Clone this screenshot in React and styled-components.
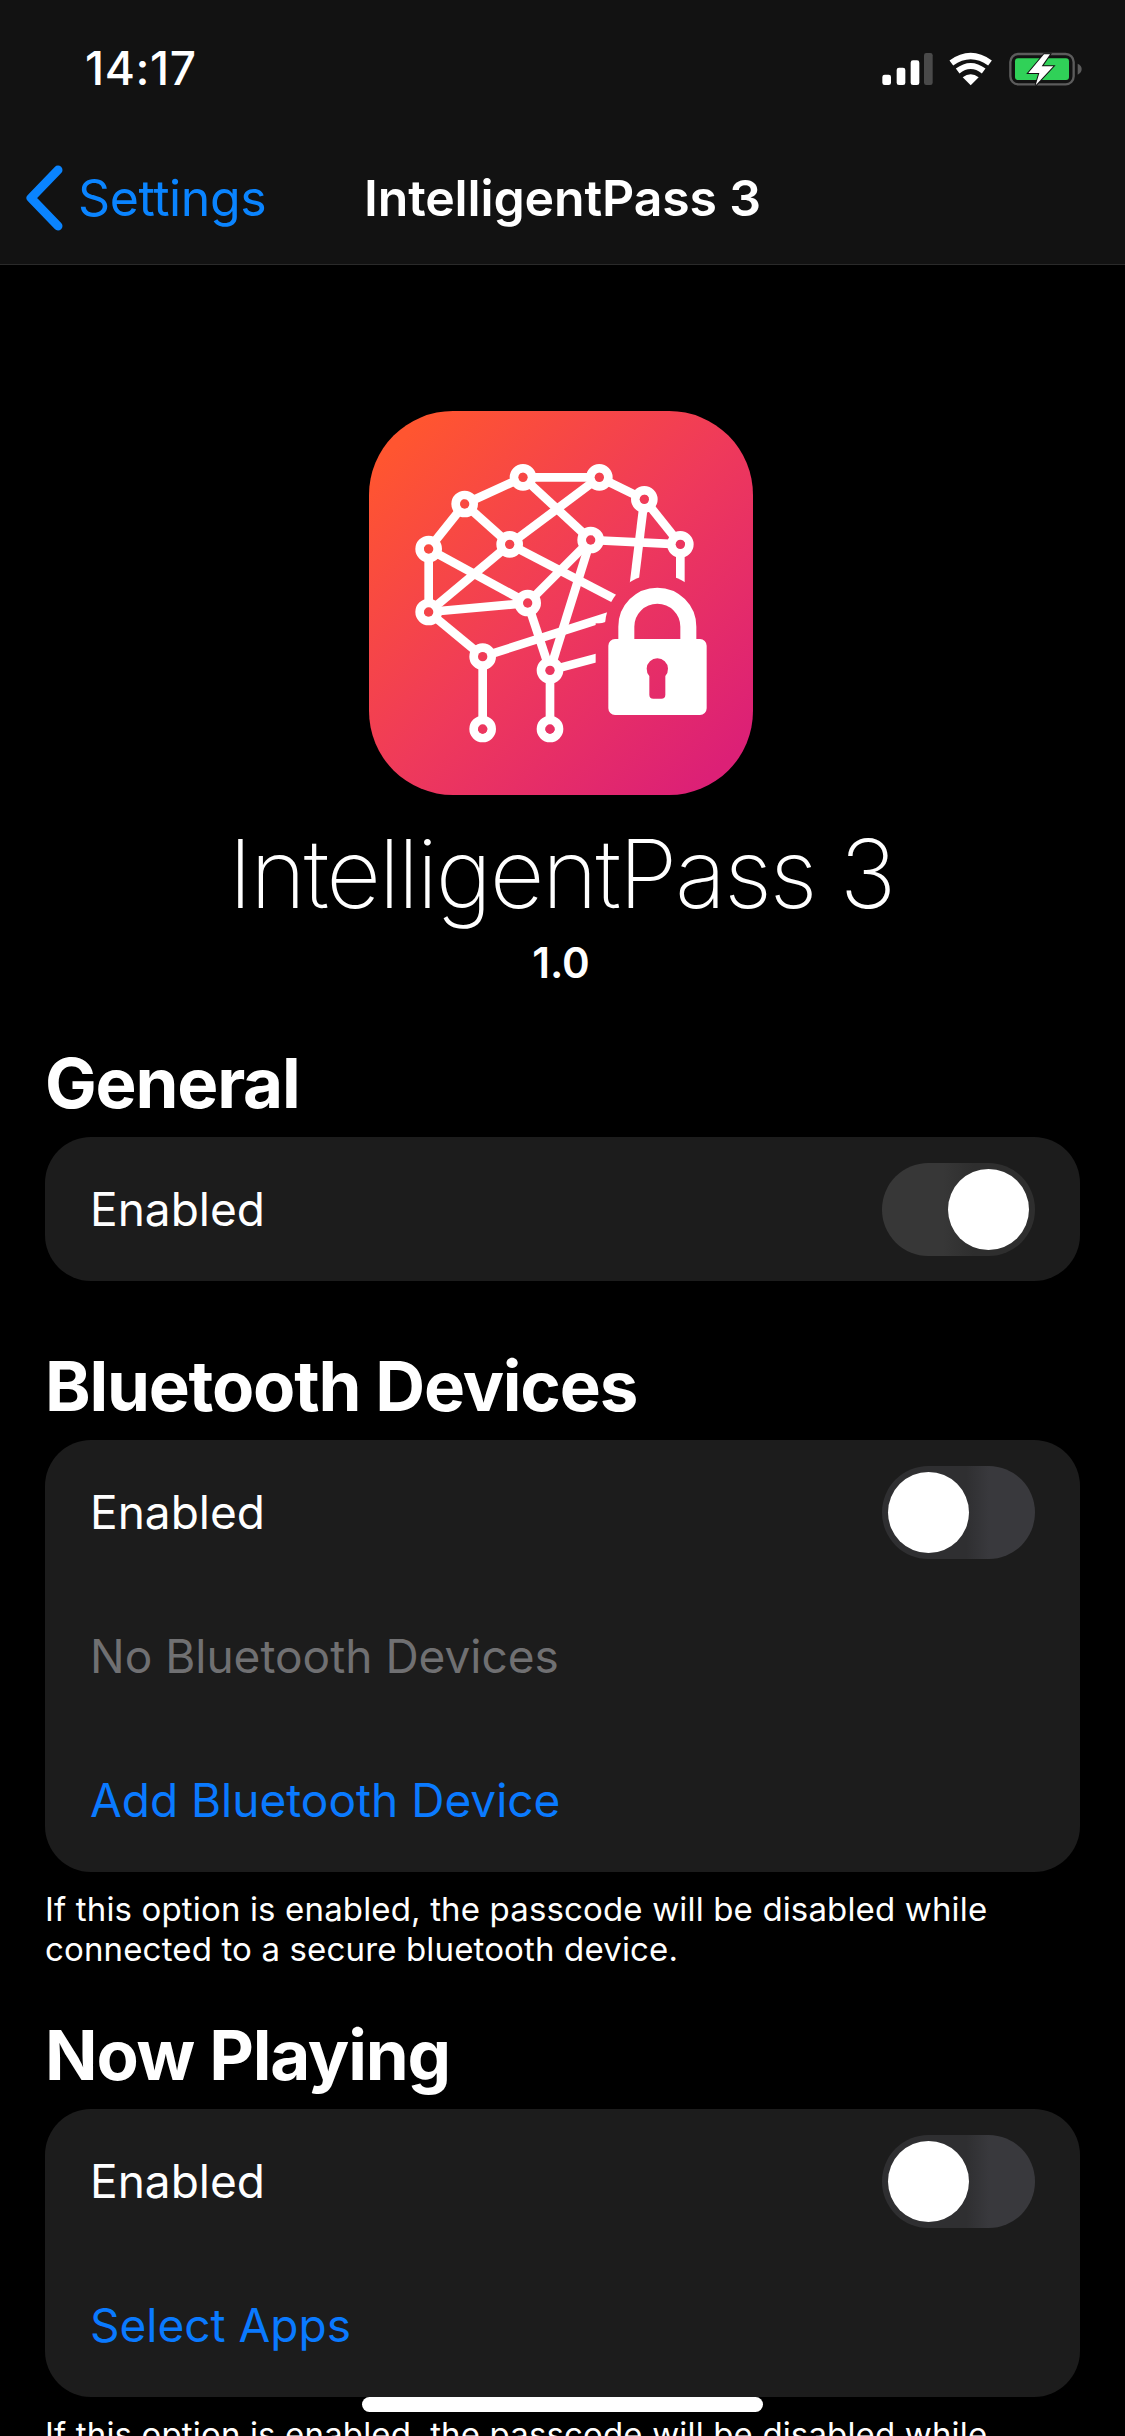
import React from 'react';
import styled, { createGlobalStyle } from 'styled-components';

const GlobalStyle = createGlobalStyle`
  html, body {
    margin: 0;
    padding: 0;
    background: #000;
  }
  body {
    font-family: Inter, "Noto Sans", "Liberation Sans", sans-serif;
    color: #fff;
  }
`;

const Phone = styled.div`
  position: relative;
  width: 1125px;
  height: 2436px;
  overflow: hidden;
  background: #000;
`;

const TopBar = styled.header`
  height: 264px;
  background: #121212;
  border-bottom: 1px solid #2a2a2a;
  display: flex;
  flex-direction: column;
`;

const StatusRow = styled.div`
  height: 132px;
  padding: 32px 45px 0 85px;
  box-sizing: border-box;
  display: flex;
  align-items: flex-start;
  justify-content: space-between;
`;

const Clock = styled.div`
  font-size: 46px;
  line-height: 72px;
  font-weight: 500;
  letter-spacing: 0.6px;
`;

const StatusIcons = styled.svg`
  width: 213px;
  height: 42px;
  margin-top: 20px;
  margin-right: -13px;
`;

const NavRow = styled.nav`
  display: grid;
  grid-template-columns: 1fr auto 1fr;
  align-items: center;
  height: 132px;
`;

const BackLink = styled.div`
  display: flex;
  align-items: center;
  color: #0a84ff;
  font-size: 50px;
  letter-spacing: -0.4px;
  padding-left: 25px;
  gap: 13px;
`;

const Chevron = styled.svg`
  width: 40px;
  height: 66px;
  flex: none;
`;

const NavTitle = styled.div`
  font-size: 50px;
  font-weight: 600;
  letter-spacing: -0.15px;
`;

const Hero = styled.section`
  display: flex;
  flex-direction: column;
  align-items: center;
  padding: 146px 3px 0 0;
`;

const AppIcon = styled.div`
  width: 384px;
  height: 384px;
  border-radius: 84px;
  background: linear-gradient(135deg, #ff5530 8%, #ef3a5a 50%, #dc2076 92%);
`;

const IconArt = styled.svg`
  display: block;
  width: 384px;
  height: 384px;
`;

const AppName = styled.h1`
  margin: 21px 0 0;
  font-size: 95px;
  line-height: 116px;
  font-weight: 200;
  letter-spacing: -2.3px;
`;

const Version = styled.div`
  font-size: 42px;
  line-height: 44px;
  font-weight: 600;
  margin: 9px 0 -3px;
`;

const Section = styled.section`
  padding: 0 45px;
  margin-top: ${p => p.$top}px;
`;

const SectionTitle = styled.h2`
  margin: 0 0 14px;
  font-size: 69px;
  line-height: 80px;
  font-weight: 700;
  letter-spacing: -1.2px;
`;

const Card = styled.div`
  background: #1c1c1c;
  border-radius: 46px;
  overflow: hidden;
`;

const Row = styled.div`
  height: 144px;
  padding: 0 45px;
  display: flex;
  align-items: center;
  justify-content: space-between;
  font-size: 46px;
  color: ${p => (p.$tone === 'link' ? '#0a7aff' : p.$tone === 'muted' ? '#707072' : '#fff')};
`;

const Track = styled.div`
  width: 153px;
  height: 93px;
  padding: 6px;
  box-sizing: border-box;
  border-radius: 47px;
  display: flex;
  justify-content: ${p => (p.$on ? 'flex-end' : 'flex-start')};
  background: ${p =>
    p.$on
      ? 'linear-gradient(90deg, #373737 40%, #2e2e2e 60%)'
      : 'linear-gradient(90deg, #2f2f31 55%, #39393d 70%)'};
`;

const Thumb = styled.div`
  width: 81px;
  height: 81px;
  border-radius: 50%;
  background: #fff;
`;

const Footnote = styled.p`
  margin: 17px 0 0;
  font-size: 33px;
  line-height: 40px;
  letter-spacing: 0.15px;
  color: #fff;
`;

const HomeBar = styled.div`
  position: absolute;
  left: 362px;
  top: 2397px;
  width: 401px;
  height: 15px;
  border-radius: 8px;
  background: #fff;
`;

const nodes = [
  [519, 262], [748, 262], [883, 328], [991, 463], [722, 450], [344, 342], [479, 463],
  [236, 477], [236, 666], [533, 639], [398, 800], [600, 841], [398, 1017], [600, 1017],
];

// each entry runs from one point to the other, the mask trims them near the lock
const links = [
  [519, 262, 748, 262], [519, 262, 344, 342], [748, 262, 883, 328], [883, 328, 991, 463],
  [344, 342, 236, 477], [236, 477, 236, 666], [344, 342, 479, 463], [519, 262, 722, 450],
  [748, 262, 479, 463], [479, 463, 236, 666], [236, 477, 533, 639], [479, 463, 850, 656],
  [722, 450, 533, 639], [722, 450, 991, 463], [883, 328, 845, 640], [991, 463, 991, 640],
  [236, 666, 533, 639], [236, 666, 398, 800], [398, 800, 830, 662], [533, 639, 600, 841],
  [722, 450, 600, 841], [600, 841, 800, 788], [398, 800, 398, 1017], [600, 841, 600, 1017],
];

const BrainLockIcon = () => (
  <IconArt viewBox="57 63 1152 1152">
    <defs>
      <mask id="brain-cut" maskUnits="userSpaceOnUse" x="57" y="63" width="1152" height="1152">
        <rect x="57" y="63" width="1152" height="1152" fill="#fff" />
        <circle cx="922" cy="710" r="157" fill="#000" />
        <rect x="737" y="700" width="472" height="400" fill="#000" />
        {nodes.map(([x, y]) => (
          <circle key={`${x}-${y}`} cx={x} cy={y} r="14" fill="#000" />
        ))}
      </mask>
    </defs>
    <g mask="url(#brain-cut)" stroke="#fff" strokeWidth="26" fill="none">
      {links.map(([x1, y1, x2, y2]) => (
        <line key={`${x1}-${y1}-${x2}-${y2}`} x1={x1} y1={y1} x2={x2} y2={y2} />
      ))}
      {nodes.map(([x, y]) => (
        <circle key={`${x}-${y}`} cx={x} cy={y} r="27" />
      ))}
    </g>
    <path d="M829 750V710a93 93 0 0 1 186 0V750" fill="none" stroke="#fff" strokeWidth="48" />
    <path
      fillRule="evenodd"
      fill="#fff"
      d="M795 747H1050a20 20 0 0 1 20 20V955a20 20 0 0 1-20 20H795a20 20 0 0 1-20-20V767a20 20 0 0 1 20-20ZM898 858V914a12 12 0 0 0 12 12H934a12 12 0 0 0 12-12V858a32 32 0 1 0-48 0Z"
    />
  </IconArt>
);

const StatusGlyphs = () => (
  <StatusIcons viewBox="90 65 639 126">
    <g fill="#fff">
      <rect x="97" y="133" width="26" height="31" rx="7" />
      <rect x="140" y="112" width="26" height="52" rx="7" />
      <rect x="182" y="90" width="26" height="74" rx="7" />
    </g>
    <rect x="222" y="68" width="26" height="96" rx="7" fill="#4a4a4a" />
    <g fill="none" stroke="#fff">
      <path d="M304 98Q362 56 420 98" strokeWidth="19" />
      <path d="M323 122Q362 92 401 122" strokeWidth="18" />
    </g>
    <path d="M362 165L338 141Q362 122 386 141Z" fill="#fff" />
    <rect x="481" y="71" width="190" height="91" rx="24" fill="none" stroke="#5c5c5c" strokeWidth="7" />
    <rect x="495" y="84" width="162" height="65" rx="9" fill="#30d158" />
    <path d="M683 100Q695 106 695 116Q695 127 683 133Z" fill="#5c5c5c" />
    <path
      d="M582 72L535 128H568L557 165L610 108H575L600 72Z"
      fill="#fff"
      stroke="#121212"
      strokeWidth="6"
      paintOrder="stroke"
    />
  </StatusIcons>
);

const Toggle = ({ on }) => (
  <Track $on={on}>
    <Thumb />
  </Track>
);

const footnote = 'If this option is enabled, the passcode will be disabled while connected to a secure bluetooth device.';

export default function App() {
  return (
    <Phone>
      <GlobalStyle />
      <TopBar>
        <StatusRow>
          <Clock>14:17</Clock>
          <StatusGlyphs />
        </StatusRow>
        <NavRow>
          <BackLink>
            <Chevron viewBox="0 0 40 66">
              <path d="M33 5L6 33L33 61" fill="none" stroke="#0a84ff" strokeWidth="9" strokeLinecap="round" strokeLinejoin="round" />
            </Chevron>
            Settings
          </BackLink>
          <NavTitle>IntelligentPass 3</NavTitle>
          <div />
        </NavRow>
      </TopBar>

      <Hero>
        <AppIcon>
          <BrainLockIcon />
        </AppIcon>
        <AppName>IntelligentPass 3</AppName>
        <Version>1.0</Version>
      </Hero>

      <Section $top={61}>
        <SectionTitle>General</SectionTitle>
        <Card>
          <Row>
            Enabled
            <Toggle on />
          </Row>
        </Card>
      </Section>

      <Section $top={65}>
        <SectionTitle>Bluetooth Devices</SectionTitle>
        <Card>
          <Row>
            Enabled
            <Toggle />
          </Row>
          <Row $tone="muted">No Bluetooth Devices</Row>
          <Row $tone="link">Add Bluetooth Device</Row>
        </Card>
        <Footnote>{footnote}</Footnote>
      </Section>

      <Section $top={46}>
        <SectionTitle>Now Playing</SectionTitle>
        <Card>
          <Row>
            Enabled
            <Toggle />
          </Row>
          <Row $tone="link">Select Apps</Row>
        </Card>
        <Footnote>{footnote}</Footnote>
      </Section>

      <HomeBar />
    </Phone>
  );
}
